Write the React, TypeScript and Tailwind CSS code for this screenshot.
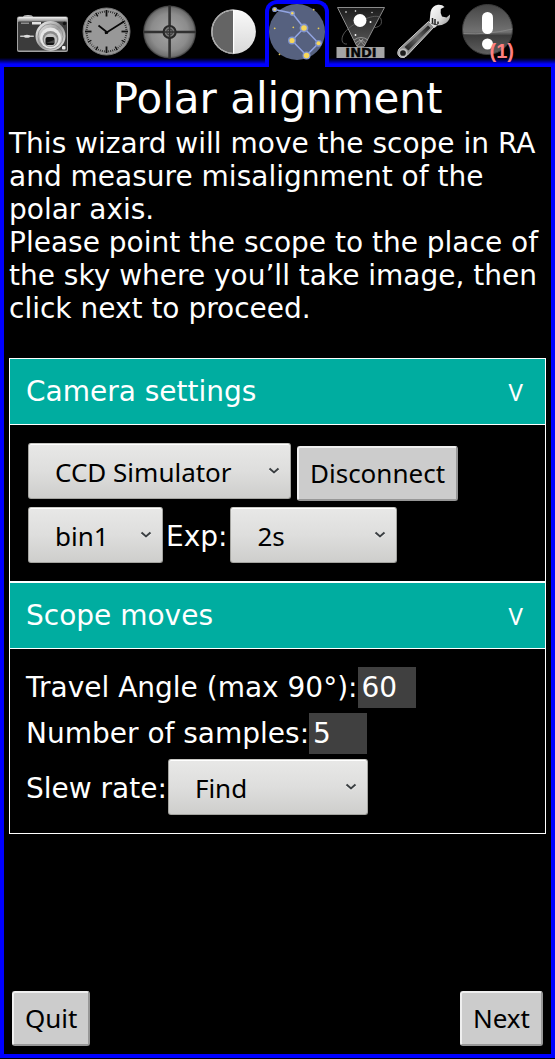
import type { ReactNode } from "react";

function CameraIcon() {
  return (
    <>
      <defs>
        <linearGradient id="cam-top" x1="0" x2="0" y1="0" y2="1">
          <stop offset="0" stopColor="#f4f4f4" />
          <stop offset="1" stopColor="#8a8a8a" />
        </linearGradient>
        <linearGradient id="cam-ring" x1="0" x2="1" y1="0" y2="1">
          <stop offset="0" stopColor="#ffffff" />
          <stop offset="0.5" stopColor="#9a9a9a" />
          <stop offset="1" stopColor="#f0f0f0" />
        </linearGradient>
      </defs>
      <ellipse cx="-14" cy="17" rx="5" ry="2" fill="#c8c8c8" />
      <rect x="-25" y="16.5" width="51" height="35.5" rx="2" fill="#a2a2a2" />
      <rect x="-24" y="17" width="49" height="4.5" rx="1.5" fill="url(#cam-top)" />
      <rect x="-24" y="21.5" width="49" height="29" rx="1" fill="#3b3b3b" />
      <rect x="-10" y="22" width="9" height="2.5" fill="#e4e4e4" />
      <rect x="-21" y="22.5" width="8" height="1.5" fill="#8d8d8d" />
      <rect x="-22" y="35.500" width="14" height="1.500" rx="0.700" fill="#c9c9c9" />
      <ellipse cx="-15" cy="36.200" rx="3" ry="1.500" fill="#dcdcdc" />
      <circle cx="22.500" cy="23.500" r="1.700" fill="#111" />
      <circle cx="8.500" cy="36" r="15" fill="url(#cam-ring)" />
      <circle cx="8.500" cy="36.500" r="12.500" fill="none" stroke="#8a8a8a" strokeWidth="0.800" />
      <circle cx="8.500" cy="38" r="10.500" fill="#e6e6e6" />
      <circle cx="8.500" cy="39" r="8" fill="#8c8c8c" />
      <circle cx="8.500" cy="40" r="6.500" fill="#c4c4c4" />
      <rect x="3.500" y="37" width="9" height="8" rx="2" fill="#151515" />
      <path d="M4 43h8v-3z" fill="#404040" />
      <rect x="20" y="46" width="3.500" height="3.500" rx="1" fill="#eee" />
    </>
  );
}

const ticks = Array.from({ length: 60 }, (_, i) => i);

function ClockIcon() {
  return (
    <>
      <circle cx="0.500" cy="31.500" r="23.500" fill="#989898" stroke="#777" strokeWidth="1" />
      {ticks.map((i) => (
        <line
          key={i}
          x1="0.5"
          x2="0.5"
          y1={i % 5 === 0 ? 10 : 10.5}
          y2={i % 15 === 0 ? 16.5 : i % 5 === 0 ? 14 : 12.5}
          stroke="#111"
          strokeWidth={i % 15 === 0 ? 1.8 : i % 5 === 0 ? 1.4 : 0.7}
          transform={`rotate(${i * 6} 0.5 31.5)`}
        />
      ))}
      <path d="M-7.500 25.500 2 33M-1 33.500 18 21.500" stroke="#080808" strokeWidth="1.700" />
      <circle cx="0.500" cy="32.500" r="1.600" fill="#080808" />
    </>
  );
}

function ReticleIcon() {
  return (
    <g transform="translate(0.6 0)">
      <defs>
        <radialGradient id="reticle">
          <stop offset="0" stopColor="#a5a5a5" />
          <stop offset="0.7" stopColor="#8c8c8c" />
          <stop offset="0.92" stopColor="#707070" />
          <stop offset="1" stopColor="#333" />
        </radialGradient>
      </defs>
      <circle cx="0" cy="32" r="26.500" fill="url(#reticle)" />
      <path d="M0 5.500v53M-26.500 32h53" stroke="#303030" strokeWidth="2.600" />
      <circle cx="0" cy="32" r="6" fill="#777" stroke="#272727" strokeWidth="2.200" />
      <path d="M0 26v12M-6 32h12" stroke="#303030" strokeWidth="1.500" />
      <circle cx="0" cy="32" r="3" fill="none" stroke="#383838" strokeWidth="1" />
    </g>
  );
}

function ContrastIcon() {
  return (
    <g transform="translate(0.6 0)">
      <defs>
        <linearGradient id="contrast" x1="0" x2="0" y1="0" y2="1">
          <stop offset="0" stopColor="#fafafa" />
          <stop offset="1" stopColor="#d8d8d8" />
        </linearGradient>
      </defs>
      <circle cx="0" cy="31.700" r="22.300" fill="url(#contrast)" />
      <path d="M0 10.500a21.200 21.200 0 0 0 0 42.400z" fill="#646464" />
      <path d="M0 9.800a21.900 21.900 0 0 0 0 43.800" fill="none" stroke="#a0a0a0" strokeWidth="1.200" />
      <path d="M0 10v43.500" stroke="#fff" strokeWidth="1.200" />
    </g>
  );
}

const brightStars = [
  [-22.3, 9.5, 1.3, 2.6],
  [-4.7, 13.3, 1.2, 2.6],
  [7, 28, 2.8, 4.4],
  [-5, 40.5, 2.6, 4],
  [21.5, 43.3, 2, 3.4],
  [9.5, 55.5, 2.8, 4],
];

const faintStars = [
  [16.7, 9.7],
  [-22.3, 28.3],
  [-3.7, 27.3],
  [21.5, 28.3],
  [-17.5, 54.3],
];

function ConstellationIcon() {
  return (
    <>
      <circle cx="0" cy="32" r="28" fill="#56617f" />
      <path
        d="M-22.300 9.500-4.700 13.300 7 28-5 40.500 9.500 55.500 21.500 43.300 7 28"
        fill="none"
        stroke="#91a4e2"
        strokeWidth="1.500"
      />
      {brightStars.map(([x, y, r, halo]) => (
        <g key={`${x}`}>
          <circle cx={x} cy={y} r={halo} fill="#8093cc" />
          <circle cx={x} cy={y} r={r} fill="#f7d75a" />
        </g>
      ))}
      {faintStars.map(([x, y]) => (
        <circle key={`${x}`} cx={x} cy={y} r="0.9" fill="#e8cc5a" />
      ))}
    </>
  );
}

function IndiIcon() {
  return (
    <>
      <defs>
        <linearGradient id="indi" x1="0" x2="0" y1="0" y2="1">
          <stop offset="0" stopColor="#1c1c1c" />
          <stop offset="1" stopColor="#5a5a5a" />
        </linearGradient>
      </defs>
      <path d="M-23.500 7.500h47L3 46.500h-7z" fill="url(#indi)" stroke="#8c8c8c" strokeWidth="1" />
      <path d="M-14 44c-6 1-8-8 2-16s30-16 32-9-3 8-8 9" fill="none" stroke="#666" strokeWidth="0.800" />
      <circle cx="-1" cy="20.500" r="6.500" fill="#fff" />
      <path d="M-7 40q7-5 14 0M-5.500 43q6-5 10 0M-4 46l6-7M4 46l-6-7" fill="none" stroke="#aaa" strokeWidth="0.800" />
      <circle cx="-15" cy="12" r="0.800" fill="#fff" />
      <circle cx="-5.500" cy="11" r="0.800" fill="#fff" />
      <circle cx="11" cy="12.500" r="0.700" fill="#ddd" />
      <circle cx="9.500" cy="22" r="1" fill="#fff" />
      <circle cx="-5.500" cy="35" r="0.900" fill="#fff" />
      <rect x="-24.500" y="47" width="48" height="11" fill="#a5a5a5" />
      <text x="0" y="57" textAnchor="middle" fontFamily="DejaVu Sans" fontWeight="700" fontSize="13" fill="#050505" stroke="#050505" strokeWidth="0.400">
        INDI
      </text>
    </>
  );
}

function WrenchIcon() {
  return (
    <>
      <defs>
        <linearGradient id="wrench" x1="0" x2="1" y1="0" y2="1">
          <stop offset="0" stopColor="#fff" />
          <stop offset="0.55" stopColor="#ddd" />
          <stop offset="1" stopColor="#888" />
        </linearGradient>
        <linearGradient id="wrench-grip" x1="1" x2="0" y1="0" y2="1">
          <stop offset="0" stopColor="#1c1c1c" />
          <stop offset="0.5" stopColor="#666" />
          <stop offset="1" stopColor="#1c1c1c" />
        </linearGradient>
      </defs>
      <path
        d="M4.500 21.500 10 27-16.500 55q-3 4-7.500 2-4-3-1-8z"
        fill="#8e8e8e"
        stroke="#d0d0d0"
        strokeWidth="1"
      />
      <path d="M4 25.500 6.500 28-15.500 50.500-19.500 47z" fill="url(#wrench-grip)" />
      <path
        d="M5.500 22 6.500 12Q8 5.500 14 4.800 18.500 4.500 20.500 7L16.800 9Q16 13 18 16.500L22.500 17.500 26 14.500Q26.500 20 22 23 18 25.500 13.500 25.500L10.500 28z"
        fill="url(#wrench)"
      />
      <path d="M8.500 18v5.500M11 19v6M14 21.500v2.500" stroke="#222" strokeWidth="1.500" />
      <path d="M7.500 23.500 14 25" stroke="#333" strokeWidth="1" />
      <circle cx="-21" cy="53" r="3.700" fill="#1c1c1c" stroke="#bdbdbd" strokeWidth="1.700" />
    </>
  );
}

function AlertIcon() {
  return (
    <>
      <defs>
        <linearGradient id="alert" x1="0" x2="0" y1="0" y2="1">
          <stop offset="0" stopColor="#454545" />
          <stop offset="0.55" stopColor="#727272" />
          <stop offset="0.62" stopColor="#3d3d3d" />
          <stop offset="1" stopColor="#606060" />
        </linearGradient>
      </defs>
      <circle cx="-0.500" cy="29.500" r="25" fill="url(#alert)" stroke="#3a3a3a" strokeWidth="1" />
      <path d="M-24.500 33.500Q0 35 24.500 29" fill="none" stroke="#8b8b8b" strokeWidth="0.800" />
      <rect x="-6" y="12" width="11" height="22" rx="5.500" fill="#fff" />
      <circle cx="-0.500" cy="44" r="5.500" fill="#fff" />
    </>
  );
}

const tabs: { label: string; icon: ReactNode; active?: boolean; badge?: string }[] = [
  { label: "Camera", icon: <CameraIcon /> },
  { label: "Sequence", icon: <ClockIcon /> },
  { label: "Guiding", icon: <ReticleIcon /> },
  { label: "Focus", icon: <ContrastIcon /> },
  { label: "Polar alignment", icon: <ConstellationIcon />, active: true },
  { label: "INDI", icon: <IndiIcon /> },
  { label: "Settings", icon: <WrenchIcon /> },
  { label: "Messages", icon: <AlertIcon />, badge: "(1)" },
];

function Tab({ label, icon, active, badge }: (typeof tabs)[number]) {
  return (
    <button
      type="button"
      aria-label={label}
      className={
        active
          ? "relative flex h-full justify-center overflow-hidden rounded-t-xl border-4 border-b-0 border-[#0000ff] bg-black"
          : "relative flex h-full justify-center"
      }
    >
      <svg viewBox="-32 0 64 64" className={active ? "-mt-1 size-16 shrink-0" : "size-16 shrink-0"} aria-hidden="true">
        {icon}
      </svg>
      {badge && (
        <span className="absolute right-1.5 bottom-0 font-['Liberation_Sans',sans-serif] text-xl leading-8 font-bold text-[#ff8080]">
          {badge}
        </span>
      )}
    </button>
  );
}

function Select({ label, value, className }: { label: string; value: string; className: string }) {
  return (
    <span className={`relative flex ${className}`}>
      <select
        aria-label={label}
        defaultValue={value}
        className="h-14 w-full appearance-none rounded-[3px] border border-[#a4a4a0] border-t-[#c8c8c4] bg-linear-to-b from-[#e8e8e7] via-[#dededd] to-[#cececc] pt-0.5 pl-[26px] font-['Noto_Sans',sans-serif] text-[26px] leading-8 text-black shadow-[inset_0_1px_0_#ffffff]"
      >
        <option>{value}</option>
      </select>
      <svg viewBox="0 0 12 8" className="pointer-events-none absolute top-6 right-[11px] h-2 w-3" aria-hidden="true">
        <path d="M1.500 2.500 6 6.500 10.500 2.500" fill="none" stroke="#fff" strokeWidth="1.500" />
        <path d="M1.500 1.500 6 5.500 10.500 1.500" fill="none" stroke="#3c4043" strokeWidth="2" />
      </svg>
    </span>
  );
}

function PushButton({ children }: { children: ReactNode }) {
  return (
    <button
      type="button"
      className="h-[55px] rounded-[3px] border-2 border-t-[#efefef] border-r-[#979797] border-b-[#979797] border-l-[#efefef] bg-[#cccccc] px-[11px] pb-0.5 font-['Noto_Sans',sans-serif] text-[26px] leading-8 text-black"
    >
      {children}
    </button>
  );
}

function SectionHeader({ title }: { title: string }) {
  return (
    <h2 className="border-b border-white bg-[#00ada0]">
      <button type="button" aria-expanded="true" className="flex h-[65px] w-full items-center justify-between pr-[22px] pl-4">
        <span>{title}</span>
        <span className="font-['Noto_Sans',sans-serif] text-2xl">V</span>
      </button>
    </h2>
  );
}

function NumberField({ id, label, value }: { id: string; label: string; value: string }) {
  return (
    <div className="flex items-center">
      <label htmlFor={id}>{label}</label>
      <input id={id} defaultValue={value} inputMode="numeric" className="h-[41px] w-[58px] bg-[#404040] px-1" />
    </div>
  );
}

export default function App() {
  return (
    <div className="flex min-h-screen flex-col bg-black font-['DejaVu_Sans',sans-serif] text-[28px] leading-[33px] text-white">
      <header className="h-[67px] bg-linear-to-b from-black from-[57px] to-[#0000ff] to-[64px]">
        <nav aria-label="Modules" className="ml-2.5 grid h-full max-w-[510px] grid-cols-8">
          {tabs.map((tab) => (
            <Tab key={tab.label} {...tab} />
          ))}
        </nav>
      </header>

      <main className="mb-px flex grow flex-col border-4 border-t-0 border-[#0000ff] px-[5px] pb-2">
        <h1 className="pt-[7px] text-center text-[42px] leading-[50px]">Polar alignment</h1>
        <p className="pt-[3px]">
          This wizard will move the scope in RA and measure misalignment of the polar axis.
          <br />
          Please point the scope to the place of the sky where you’ll take image, then click next to proceed.
        </p>

        <div className="mt-[33px]">
          <section className="border border-white">
            <SectionHeader title="Camera settings" />
            <div className="flex flex-col gap-1.5 p-[18px]">
              <div className="flex h-[58px] gap-1.5">
                <Select label="Camera" value="CCD Simulator" className="w-[263px]" />
                <div className="self-end">
                  <PushButton>Disconnect</PushButton>
                </div>
              </div>
              <div className="flex items-baseline">
                <Select label="Binning" value="bin1" className="w-[135px]" />
                <span className="px-[3px]">Exp:</span>
                <Select label="Exposure" value="2s" className="w-[167px]" />
              </div>
            </div>
          </section>
          <section className="border border-white">
            <SectionHeader title="Scope moves" />
            <div className="flex flex-col gap-[5px] px-4 py-[18px]">
              <NumberField id="angle" label="Travel Angle (max 90°):" value="60" />
              <NumberField id="samples" label="Number of samples:" value="5" />
              <div className="flex items-baseline">
                <span>Slew rate:</span>
                <Select label="Slew rate" value="Find" className="ml-px w-[200px]" />
              </div>
            </div>
          </section>
        </div>

        <footer className="mt-auto flex justify-between px-[3px] pt-8">
          <PushButton>Quit</PushButton>
          <PushButton>Next</PushButton>
        </footer>
      </main>
    </div>
  );
}
